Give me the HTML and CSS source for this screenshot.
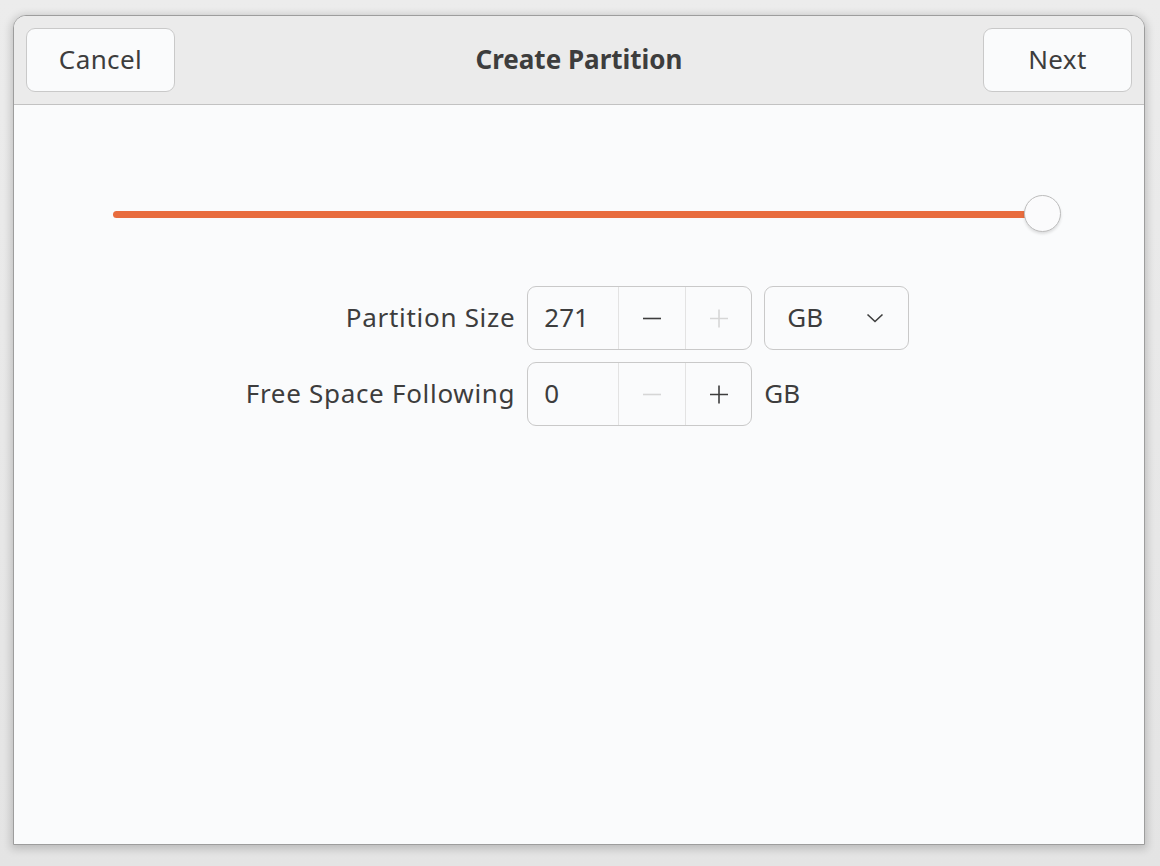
FILE: index.html
```html
<!DOCTYPE html>
<html>
<head>
<meta charset="utf-8">
<link rel="stylesheet" href="styles.css">
</head>
<body>
<div class="backdrop">
  <div class="window">
    <header class="headerbar">
      <button class="btn">Cancel</button>
      <div class="title">Create Partition</div>
      <button class="btn">Next</button>
    </header>
    <main class="content">
      <div class="slider">
        <div class="track"></div>
        <div class="knob"></div>
      </div>
      <div class="form">
        <div class="label">Partition Size</div>
        <div class="spin">
          <div class="spin-value">271</div>
          <div class="spin-btn">
            <svg width="20" height="20" viewBox="0 0 20 20"><path d="M1 10.5h18" stroke="#3d3d3d" stroke-width="1.6"/></svg>
          </div>
          <div class="spin-btn disabled">
            <svg width="20" height="20" viewBox="0 0 20 20"><path d="M1 10.5h18M10 1.5v18" stroke="#d6d6d6" stroke-width="1.6"/></svg>
          </div>
        </div>
        <div class="dropdown">
          <span>GB</span>
          <svg width="18" height="10" viewBox="0 0 18 10"><path d="M1.5 1.5l7.5 7 7.5-7" fill="none" stroke="#3d3d3d" stroke-width="1.6"/></svg>
        </div>

        <div class="label">Free Space Following</div>
        <div class="spin">
          <div class="spin-value">0</div>
          <div class="spin-btn disabled">
            <svg width="20" height="20" viewBox="0 0 20 20"><path d="M1 10.5h18" stroke="#d6d6d6" stroke-width="1.6"/></svg>
          </div>
          <div class="spin-btn">
            <svg width="20" height="20" viewBox="0 0 20 20"><path d="M1 10.5h18M10 1.5v18" stroke="#3d3d3d" stroke-width="1.6"/></svg>
          </div>
        </div>
        <div class="unit">GB</div>
      </div>
    </main>
  </div>
</div>
</body>
</html>
```
FILE: styles.css
```css
html, body {
  margin: 0;
  padding: 0;
}
body {
  width: 1160px;
  height: 866px;
  overflow: hidden;
  background: #dedede;
  font-family: "Noto Sans", "DejaVu Sans", sans-serif;
  color: #3d3d3d;
}
.backdrop {
  width: 1160px;
  height: 866px;
  padding: 15px 0 0 13px;
  box-sizing: border-box;
  background: linear-gradient(#ececec, #e4e4e4);
}
.window {
  width: 1132px;
  height: 830px;
  box-sizing: border-box;
  border: 1px solid #9d9d9d;
  border-radius: 13px 13px 0 0;
  overflow: hidden;
  background: #fafbfc;
  box-shadow: 0 2px 8px 2px rgba(0,0,0,0.18);
  display: flex;
  flex-direction: column;
}
.headerbar {
  height: 89px;
  box-sizing: border-box;
  flex: none;
  background: #ebebeb;
  border-bottom: 1px solid #c2c2c2;
  display: flex;
  align-items: center;
  justify-content: space-between;
  padding: 0 12px;
}
.btn {
  width: 149px;
  height: 64px;
  border: 1px solid #c9c9c9;
  border-radius: 9px;
  background: #fafbfc;
  font-family: inherit;
  font-size: 26px;
  letter-spacing: 0.4px;
  color: #3d3d3d;
  padding: 0 0 3px;
}
.title {
  font-size: 26px;
  font-weight: bold;
  padding-bottom: 3px;
}
.content {
  flex: 1;
  display: flex;
  flex-direction: column;
  align-items: center;
  padding-top: 90px;
}
.slider {
  position: relative;
  width: 948px;
  height: 38px;
  margin-left: 16px;
  display: flex;
  align-items: center;
}
.track {
  width: 930px;
  height: 7px;
  border-radius: 4px;
  background: #e86c3e;
}
.knob {
  position: absolute;
  right: 0;
  top: 0;
  width: 37px;
  height: 37px;
  box-sizing: border-box;
  border: 1px solid #bdbdbd;
  border-radius: 50%;
  background: #fbfbfc;
  box-shadow: 0 2px 3px rgba(0,0,0,0.12);
}
.form {
  margin-top: 53px;
  margin-right: 3px;
  display: grid;
  grid-template-columns: auto auto auto;
  column-gap: 12px;
  row-gap: 12px;
  align-items: center;
}
.label {
  text-align: right;
  font-size: 26px;
  letter-spacing: 0.7px;
  padding-bottom: 2px;
}
.spin {
  width: 225px;
  height: 64px;
  box-sizing: border-box;
  border: 1px solid #c9c9c9;
  border-radius: 9px;
  background: #fafbfc;
  display: flex;
}
.spin-value {
  width: 90px;
  box-sizing: border-box;
  padding-left: 16px;
  font-size: 26px;
  display: flex;
  align-items: center;
  padding-bottom: 2px;
}
.spin-btn {
  flex: 1;
  border-left: 1px solid #e3e3e3;
  display: flex;
  align-items: center;
  justify-content: center;
}
.dropdown {
  width: 145px;
  height: 64px;
  box-sizing: border-box;
  border: 1px solid #c9c9c9;
  border-radius: 9px;
  background: #fafbfc;
  display: flex;
  align-items: center;
  justify-content: space-between;
  padding: 0 24px 0 22px;
  font-size: 26px;
}
.dropdown span {
  padding-bottom: 2px;
}
.unit {
  font-size: 26px;
  padding-bottom: 2px;
}
```
